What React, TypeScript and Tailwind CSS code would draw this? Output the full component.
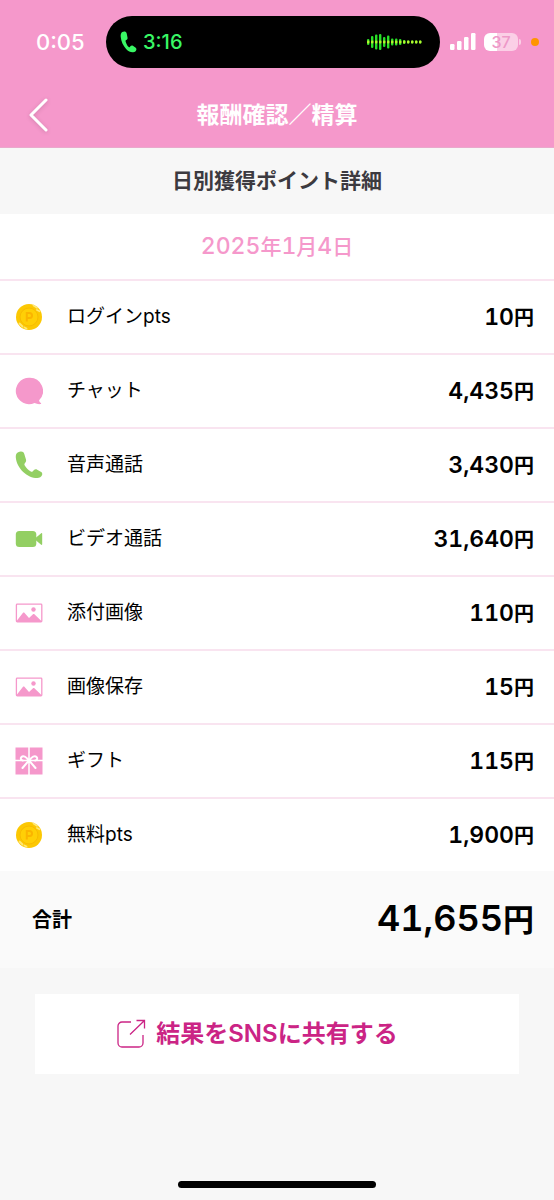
import type { ReactNode } from 'react';

interface RewardItem {
  id: string;
  label: string;
  amount: number;
  icon: ReactNode;
}

function CoinIcon() {
  return (
    <svg viewBox="0 0 28 28" className="w-7 h-7" aria-hidden="true">
      <circle cx="14" cy="14" r="13" fill="#fcc803" />
      <circle cx="14" cy="14" r="9" fill="#ffcf06" stroke="#f8bb02" strokeWidth="1" />
      <path d="M18.5 2.500l3.500 2.200M22 7l2.500 1.200M4.500 20.500l3 3M9.500 24.500l2 1" stroke="#ffe777" strokeWidth="1.800" strokeLinecap="round" />
      <path d="M11.800 18.500V10h2.700a2.500 2.500 0 0 1 0 5h-2.700" fill="none" stroke="#fbb400" strokeWidth="2" />
    </svg>
  );
}

function ChatIcon() {
  return (
    <svg viewBox="0 0 28 28" className="w-7 h-7" aria-hidden="true">
      <path
        d="M14 .8a13.200 13.200 0 1 0 5.500 25.200c2 1 4.400 1.400 6.300 1 .5-.1.5-.6.1-.9-1-.6-1.700-1.600-1.800-2.800A13.200 13.200 0 0 0 14 .8z"
        fill="#f598cb"
      />
    </svg>
  );
}

function PhoneIcon() {
  return (
    <svg viewBox="0 0 28 28" className="w-7 h-7" aria-hidden="true">
      <path
        d="M3.200 1.300C1.300 2.200.6 4.100.8 6.500c.5 5.300 3.300 10.600 7.400 14.500 3.900 3.700 9 6.100 14 6.100 2.300 0 4.100-1.100 4.900-3 .4-1.300.1-2.500-.9-3.100l-4-2.300c-1.200-.7-2.400-.5-3.200.4l-1.200 1.200c-.6.6-1.300.7-2 .3-2.700-1.500-4.800-3.700-6.200-6.300-.4-.7-.3-1.400.2-2l.6-.9c.7-.9.9-2 .5-3.100L9.300 3C8.700 1.300 7.500.5 5.800.6c-.9 0-1.800.2-2.600.7z"
        fill="#93cf63"
      />
    </svg>
  );
}

function VideoIcon() {
  return (
    <svg viewBox="0 0 28 28" className="w-7 h-7" aria-hidden="true">
      <rect x="0.800" y="6" width="20.500" height="16" rx="3.500" fill="#93cf63" />
      <path d="M20.500 13l5.700-4.800c.4-.3 1 0 1 .5v10.600c0 .5-.6.8-1 .5L20.500 15z" fill="#93cf63" />
    </svg>
  );
}

function ImageIcon() {
  return (
    <svg viewBox="0 0 28 28" className="w-7 h-7" aria-hidden="true">
      <rect x="1.400" y="5.100" width="25.400" height="17.800" rx="0.800" fill="none" stroke="#f598cb" strokeWidth="1.300" />
      <circle cx="18.500" cy="10.500" r="2.200" fill="#f598cb" />
      <path d="M2 21.500l6-7.700c.4-.5 1-.5 1.400 0l4.600 5.200 4-3.800c.4-.4 1-.4 1.400 0l7 6.800V23H2z" fill="#f598cb" />
    </svg>
  );
}

function GiftIcon() {
  return (
    <svg viewBox="0 0 28 28" className="w-7 h-7" aria-hidden="true">
      <rect x="0.500" y="0.500" width="27" height="27" fill="#f598cb" />
      <path d="M14 0v28M0 13.500h28" stroke="#fff" strokeWidth="1.500" />
      <g fill="none" stroke="#fff" strokeWidth="2" strokeLinecap="round">
        <path d="M13.500 13.500C11.500 9.500 8 8.500 6.500 10c-1.300 1.400-.8 3.200 1.200 3.500M14.500 13.500c2-4 5.500-5 7-3.500 1.300 1.400.8 3.200-1.200 3.500" />
        <path d="M13.500 14l-6 7M14.500 14l6 7" />
      </g>
      <rect x="12" y="11.500" width="4" height="4" rx="1" fill="#fff" />
    </svg>
  );
}

const items: RewardItem[] = [
  { id: 'login', label: 'ログインpts', amount: 10, icon: <CoinIcon /> },
  { id: 'chat', label: 'チャット', amount: 4435, icon: <ChatIcon /> },
  { id: 'voice', label: '音声通話', amount: 3430, icon: <PhoneIcon /> },
  { id: 'video', label: 'ビデオ通話', amount: 31640, icon: <VideoIcon /> },
  { id: 'attachment', label: '添付画像', amount: 110, icon: <ImageIcon /> },
  { id: 'saved', label: '画像保存', amount: 15, icon: <ImageIcon /> },
  { id: 'gift', label: 'ギフト', amount: 115, icon: <GiftIcon /> },
  { id: 'free', label: '無料pts', amount: 1900, icon: <CoinIcon /> },
];

const waveHeights = [6, 12, 15, 16, 10, 13, 7, 7, 6, 4, 3, 3, 3, 3];

function StatusBar() {
  return (
    <div className="flex items-center pt-4 pl-9 pr-[15px]">
      <span className="w-[70px] text-[22px] leading-none font-medium text-white">0:05</span>
      <div className="flex-1 h-[52px] rounded-full bg-black flex items-center pl-[14px] pr-[18px]">
        <svg viewBox="0 0 17 22" className="w-[17px] h-[22px]" aria-hidden="true">
          <path
            d="M2.300 1C.9 1.900.5 3.600.7 5.800c.5 4.700 2.400 9 5.400 12.200 2.100 2.300 4.600 3.500 7 3.300 1.900-.2 3.100-1.300 3.300-2.800.1-.9-.2-1.600-1-2.100l-2.500-1.600c-.9-.5-1.700-.4-2.300.3l-.7.9c-.4.4-.8.4-1.200 0-1.500-1.500-2.500-3.400-3.100-5.600-.1-.6 0-1 .5-1.300l.7-.4c.7-.5.9-1.200.7-2.100L6.700 2.500C6.300 1.100 5.400.5 4.200.5c-.7 0-1.400.2-1.900.5z"
            fill="#39f765"
          />
        </svg>
        <span className="ml-1.5 text-xl leading-none font-medium text-[#39f765]">3:16</span>
        <svg viewBox="0 0 56 18" className="ml-auto w-14 h-[18px]" aria-hidden="true">
          {waveHeights.map((h, i) => (
            <g key={i}>
              <rect x={i * 4 + 1} y={9 - h / 2} width="2.400" height={h} rx="1" fill="#28df27" />
              <rect x={i * 4 + 1} y="7.500" width="2.400" height="3" rx="1" fill="#b8f52e" />
            </g>
          ))}
        </svg>
      </div>
      <svg viewBox="0 0 26 18" className="ml-2.5 w-[26px] h-[18px]" fill="#fff" aria-hidden="true">
        <rect x="0" y="11" width="4.500" height="6" rx="1.200" />
        <rect x="7" y="8" width="4.500" height="9" rx="1.200" />
        <rect x="14" y="4" width="4.500" height="13" rx="1.200" />
        <rect x="21" y="0" width="4.500" height="17" rx="1.200" />
      </svg>
      <div className="ml-2 w-[34px] h-[18px] rounded-md bg-linear-to-r from-white from-37% to-[#fbcfe6] to-37% flex items-center justify-center text-base leading-none font-medium text-[#ee98c8]">
        37
      </div>
      <span className="ml-px w-0.5 h-1.5 rounded-r-full bg-[#fbcfe6]" />
      <span className="ml-2.5 w-2 h-2 rounded-full bg-[#ff9500]" />
    </div>
  );
}

export default function App() {
  const total = items.reduce((sum, item) => sum + item.amount, 0);

  return (
    <div className="min-h-screen flex flex-col bg-[#f7f7f7] text-black font-['Inter','Noto_Sans_CJK_JP',sans-serif]">
      {/* Header */}
      <header className="bg-[#f598cb] border-b border-[#e9a9cc]">
        <StatusBar />
        <div className="h-[79px] grid grid-cols-[56px_1fr_56px] items-center pt-[15px]">
          <button type="button" aria-label="戻る" className="pl-7">
            <svg viewBox="0 0 22 36" className="w-[22px] h-9 drop-shadow-sm" aria-hidden="true">
              <path d="M18 3L3 18l15 15" fill="none" stroke="#fff" strokeWidth="3" strokeLinecap="round" strokeLinejoin="round" />
            </svg>
          </button>
          <h1 className="text-center text-[23px] leading-8 font-bold text-white">報酬確認／精算</h1>
        </div>
      </header>

      <main className="flex-1">
        <h2 className="py-[17px] text-center text-[21px] leading-8 font-bold text-[#3c3a40]">日別獲得ポイント詳細</h2>

        <p className="py-4 bg-white border-b-2 border-[#f9e4f0] text-center text-[21px] leading-8 font-medium text-[#f598cb]">
          <span className="text-[23px] tabular-nums">2025</span>年
          <span className="text-[23px] tabular-nums">1</span>月
          <span className="text-[23px] tabular-nums">4</span>日
        </p>

        {/* Breakdown */}
        <table className="w-full bg-white border-separate border-spacing-0">
          <tbody>
            {items.map((item) => (
              <tr key={item.id} className="group">
                <td className="w-[67px] h-[74px] p-0 pl-[15px] border-b-2 border-[#f9e4f0] group-last:h-[72px] group-last:border-0">
                  {item.icon}
                </td>
                <th
                  scope="row"
                  className="p-0 border-b-2 border-[#f9e4f0] group-last:border-0 text-left text-[19px] leading-8 font-normal"
                >
                  {item.label}
                </th>
                <td className="p-0 pr-5 border-b-2 border-[#f9e4f0] group-last:border-0 text-right text-xl leading-8 font-semibold whitespace-nowrap">
                  <span className="text-[23px] tabular-nums">{item.amount.toLocaleString('en-US')}</span>円
                </td>
              </tr>
            ))}
          </tbody>
        </table>

        {/* Total */}
        <div className="flex items-center justify-between bg-[#fafafa] py-6 pl-8 pr-5">
          <span className="text-xl font-bold">合計</span>
          <span className="text-[31px] leading-[49px] font-semibold">
            <span className="text-4xl tabular-nums">{total.toLocaleString('en-US')}</span>円
          </span>
        </div>

        <div className="px-[35px] pt-[26px]">
          <button
            type="button"
            className="w-full h-20 flex items-center justify-center gap-2.5 bg-white pr-10 text-2xl font-semibold text-[#cb2485]"
          >
            <svg viewBox="0 0 30 30" className="w-[30px] h-[30px]" fill="none" stroke="currentColor" strokeWidth="1.300" aria-hidden="true">
              <path d="M15 3H6a4 4 0 0 0-4 4v17a4 4 0 0 0 4 4h17a4 4 0 0 0 4-4v-8" />
              <path d="M14 15.500L28.500 1.500M20.500 1.500h8v8" />
            </svg>
            結果をSNSに共有する
          </button>
        </div>
      </main>

      {/* Home indicator */}
      <div className="mx-auto mb-3 w-[198px] h-[7px] rounded-full bg-black" />
    </div>
  );
}
